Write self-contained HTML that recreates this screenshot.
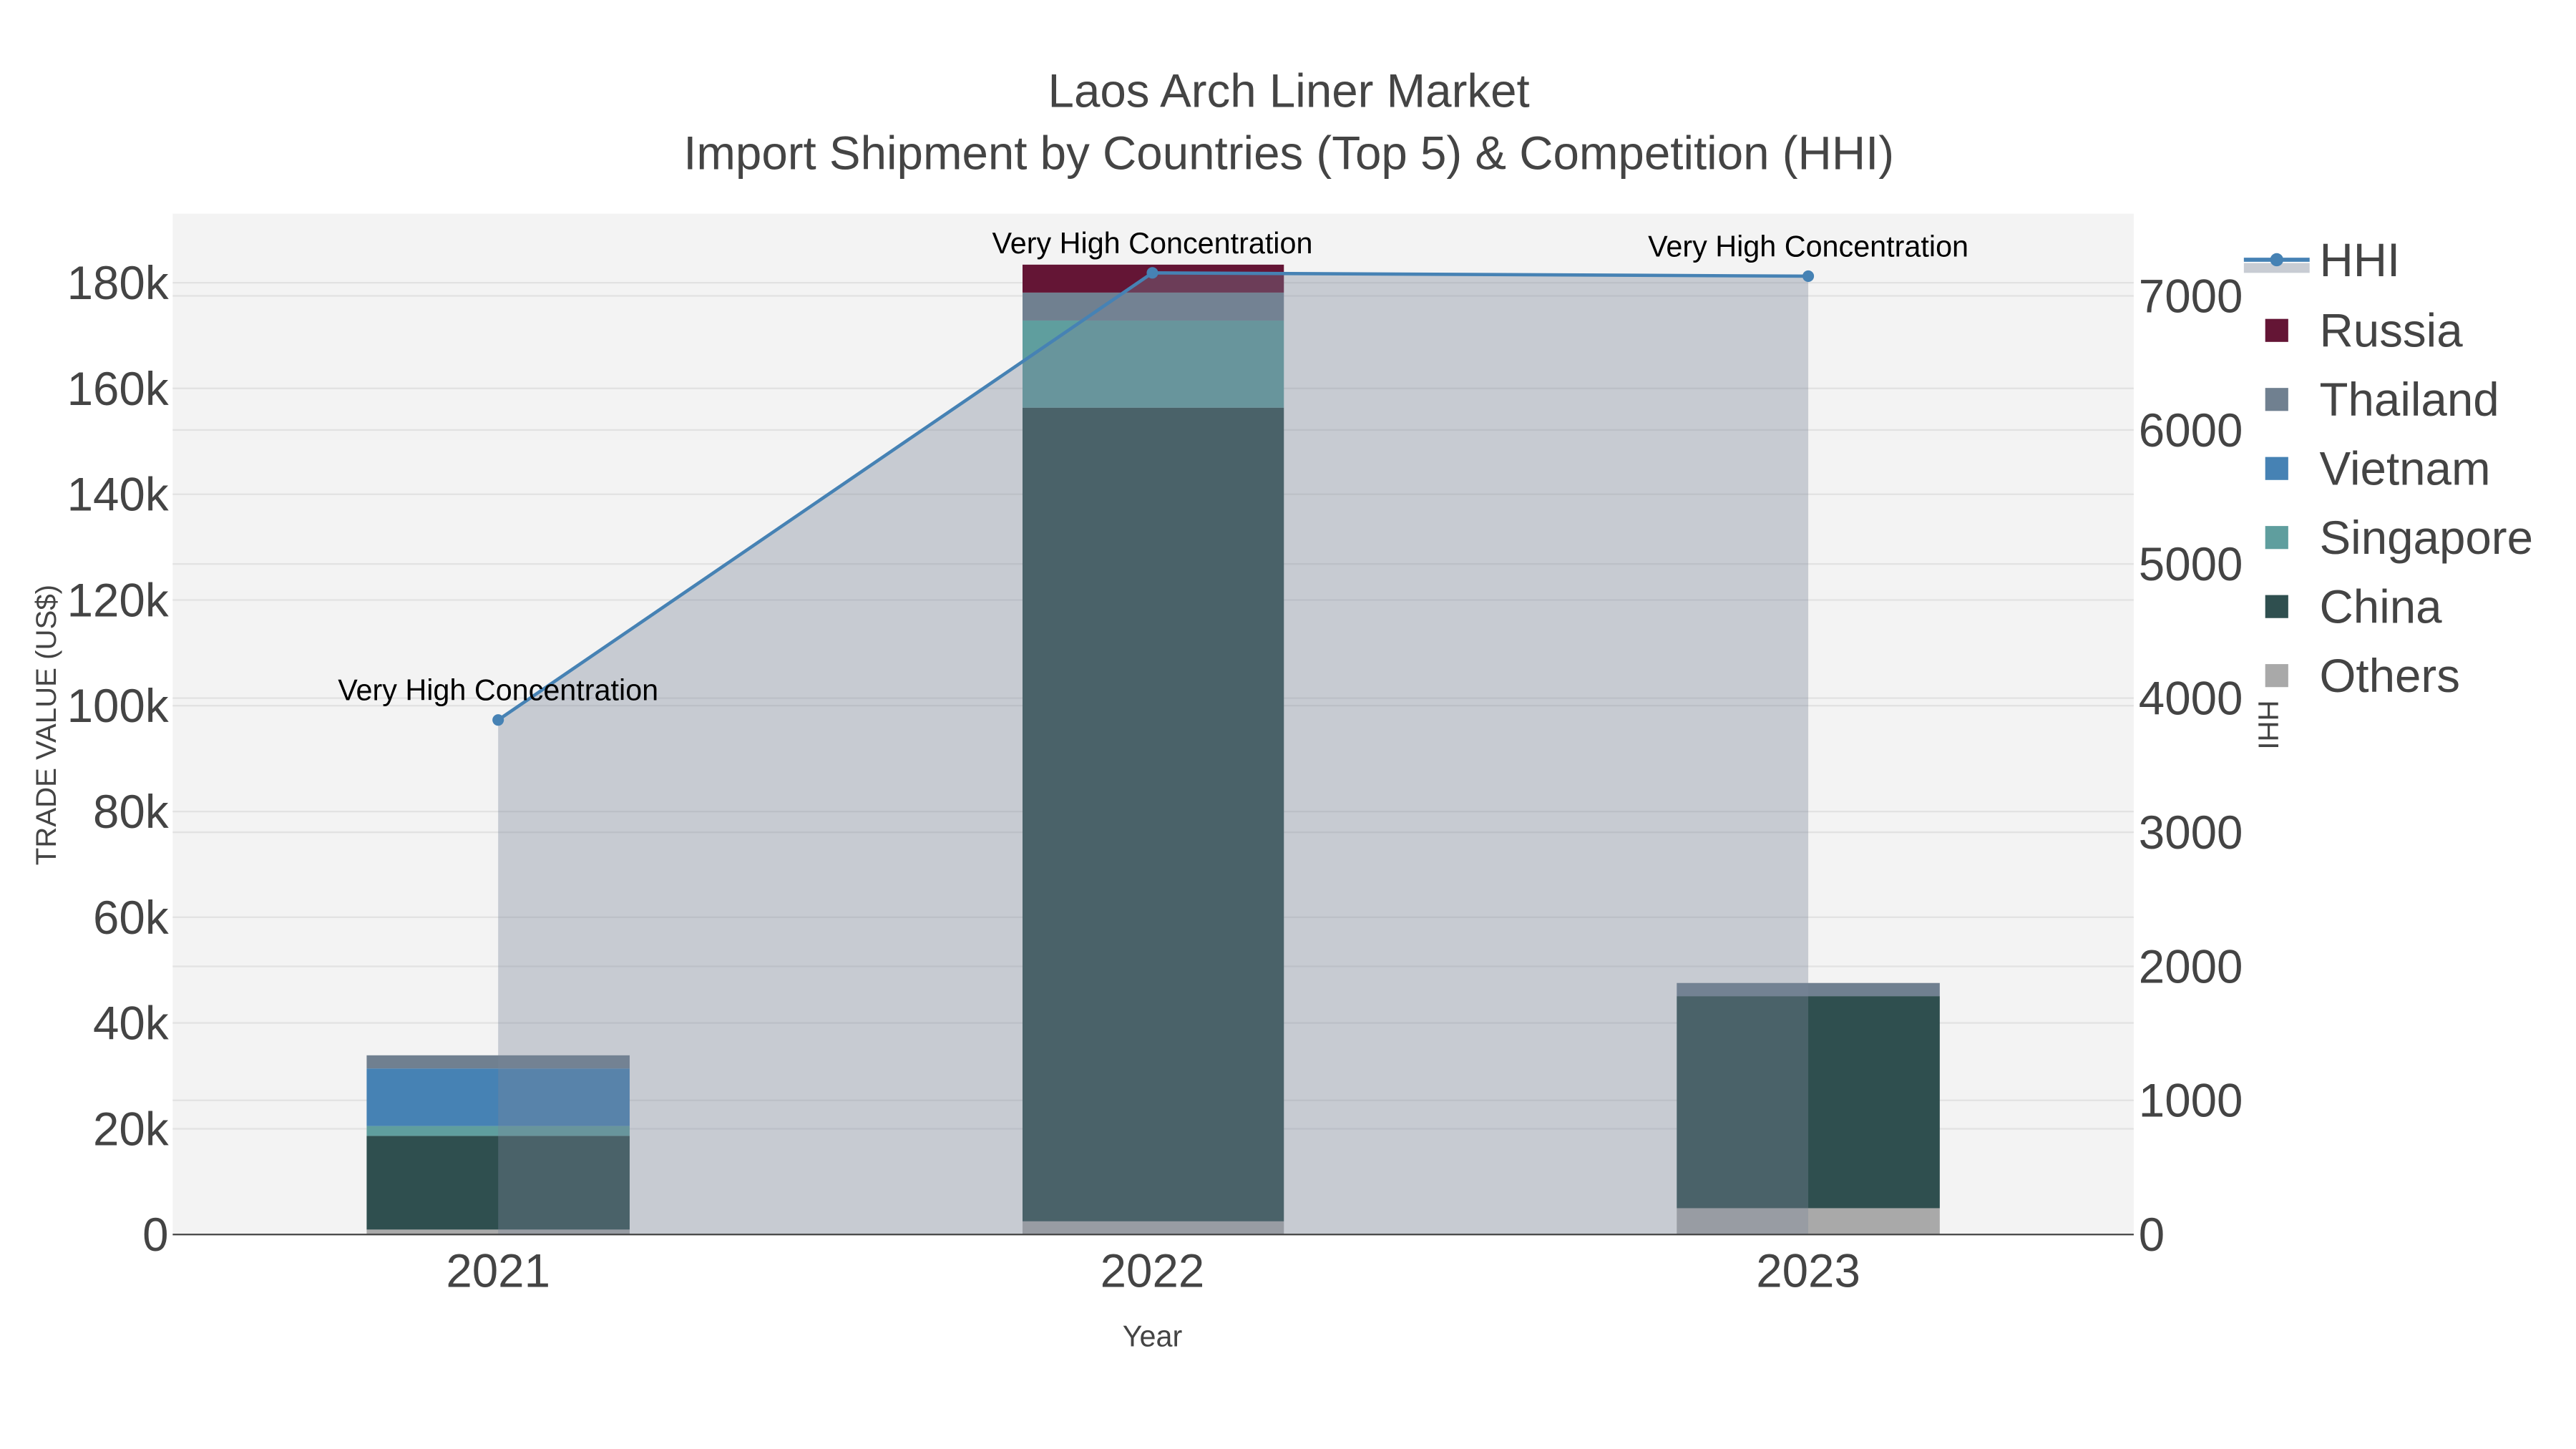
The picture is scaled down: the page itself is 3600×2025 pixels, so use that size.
<!DOCTYPE html>
<html><head><meta charset="utf-8"><style>
html,body{margin:0;padding:0;background:#fff;}
svg{display:block;font-family:"Liberation Sans",sans-serif;}
</style></head><body>
<svg width="3600" height="2025" viewBox="0 0 1567 881.5" xmlns="http://www.w3.org/2000/svg">
<rect x="0" y="0" width="1567" height="881.5" fill="#fff"/>
<rect x="105" y="130" width="1193" height="621" fill="#f3f3f3"/>
<g stroke="#e2e2e2" stroke-width="1">
<line x1="105" x2="1298" y1="686.7" y2="686.7"/><line x1="105" x2="1298" y1="622.3" y2="622.3"/>
<line x1="105" x2="1298" y1="558" y2="558"/><line x1="105" x2="1298" y1="493.7" y2="493.7"/>
<line x1="105" x2="1298" y1="429.3" y2="429.3"/><line x1="105" x2="1298" y1="365" y2="365"/>
<line x1="105" x2="1298" y1="300.7" y2="300.7"/><line x1="105" x2="1298" y1="236.3" y2="236.3"/>
<line x1="105" x2="1298" y1="172" y2="172"/>
<line x1="105" x2="1298" y1="669.4" y2="669.4"/><line x1="105" x2="1298" y1="587.9" y2="587.9"/>
<line x1="105" x2="1298" y1="506.3" y2="506.3"/><line x1="105" x2="1298" y1="424.7" y2="424.7"/>
<line x1="105" x2="1298" y1="343.1" y2="343.1"/><line x1="105" x2="1298" y1="261.6" y2="261.6"/>
<line x1="105" x2="1298" y1="180" y2="180"/>
</g>
<!-- 2021 -->
<rect x="223" y="748" width="160" height="3" fill="#a9a9a9"/>
<rect x="223" y="691" width="160" height="57" fill="#2f4f4f"/>
<rect x="223" y="685" width="160" height="6" fill="#5f9e9e"/>
<rect x="223" y="650" width="160" height="35" fill="#4682b4"/>
<rect x="223" y="642" width="160" height="8" fill="#708090"/>
<!-- 2022 -->
<rect x="622" y="743" width="159" height="8" fill="#a9a9a9"/>
<rect x="622" y="248" width="159" height="495" fill="#2f4f4f"/>
<rect x="622" y="195" width="159" height="53" fill="#5f9e9e"/>
<rect x="622" y="178" width="159" height="17" fill="#708090"/>
<rect x="622" y="161" width="159" height="17" fill="#641535"/>
<!-- 2023 -->
<rect x="1020" y="735" width="160" height="16" fill="#a9a9a9"/>
<rect x="1020" y="606" width="160" height="129" fill="#2f4f4f"/>
<rect x="1020" y="598" width="160" height="8" fill="#708090"/>
<!-- HHI fill -->
<polygon points="303,751 303,438 701,166 1100,168 1100,751" fill="rgb(122,134,153)" fill-opacity="0.36"/>
<polyline points="303,438 701,166 1100,168" fill="none" stroke="#4682b4" stroke-width="2"/>
<circle cx="303" cy="438" r="3.5" fill="#4682b4"/><circle cx="701" cy="166" r="3.5" fill="#4682b4"/><circle cx="1100" cy="168" r="3.5" fill="#4682b4"/>
<line x1="105" x2="1298" y1="751" y2="751" stroke="#444" stroke-width="1"/>
<g font-size="18" fill="#000" text-anchor="middle">
<text x="303" y="426">Very High Concentration</text>
<text x="701" y="154">Very High Concentration</text>
<text x="1100" y="156">Very High Concentration</text>
</g>
<g font-size="28.5" fill="#444" text-anchor="middle">
<text x="784" y="65">Laos Arch Liner Market</text>
<text x="784" y="103">Import Shipment by Countries (Top 5) &amp; Competition (HHI)</text>
</g>
<g font-size="28.5" fill="#444" text-anchor="end">
<text x="102.5" y="761">0</text><text x="102.5" y="696.7">20k</text><text x="102.5" y="632.3">40k</text>
<text x="102.5" y="568">60k</text><text x="102.5" y="503.7">80k</text><text x="102.5" y="439.3">100k</text>
<text x="102.5" y="375">120k</text><text x="102.5" y="310.7">140k</text><text x="102.5" y="246.3">160k</text>
<text x="102.5" y="182">180k</text>
</g>
<g font-size="28.5" fill="#444">
<text x="1301" y="761">0</text><text x="1301" y="679.4">1000</text><text x="1301" y="597.9">2000</text>
<text x="1301" y="516.3">3000</text><text x="1301" y="434.7">4000</text><text x="1301" y="353.1">5000</text>
<text x="1301" y="271.6">6000</text><text x="1301" y="190">7000</text>
</g>
<g font-size="28.5" fill="#444" text-anchor="middle">
<text x="303" y="783">2021</text><text x="701" y="783">2022</text><text x="1100" y="783">2023</text>
</g>
<text x="701" y="819" font-size="18" fill="#444" text-anchor="middle">Year</text>
<text transform="translate(34,441) rotate(-90)" font-size="17.5" fill="#444" text-anchor="middle">TRADE VALUE (US$)</text>
<text transform="translate(1374,441) rotate(90)" font-size="17.5" fill="#444" text-anchor="middle">HHI</text>
<!-- legend -->
<rect x="1365" y="160" width="40" height="6" fill="#c8ccd3"/>
<line x1="1365" x2="1405" y1="158" y2="158" stroke="#4682b4" stroke-width="2.5"/>
<circle cx="1385" cy="158" r="4" fill="#4682b4"/>
<g font-size="28.5" fill="#444">
<text x="1411" y="168">HHI</text>
<text x="1411" y="211">Russia</text>
<text x="1411" y="253">Thailand</text>
<text x="1411" y="295">Vietnam</text>
<text x="1411" y="337">Singapore</text>
<text x="1411" y="379">China</text>
<text x="1411" y="421">Others</text>
</g>
<rect x="1378" y="194" width="14" height="14" fill="#641535"/>
<rect x="1378" y="236" width="14" height="14" fill="#708090"/>
<rect x="1378" y="278" width="14" height="14" fill="#4682b4"/>
<rect x="1378" y="320" width="14" height="14" fill="#5f9e9e"/>
<rect x="1378" y="362" width="14" height="14" fill="#2f4f4f"/>
<rect x="1378" y="404" width="14" height="14" fill="#a9a9a9"/>
</svg>
</body></html>
